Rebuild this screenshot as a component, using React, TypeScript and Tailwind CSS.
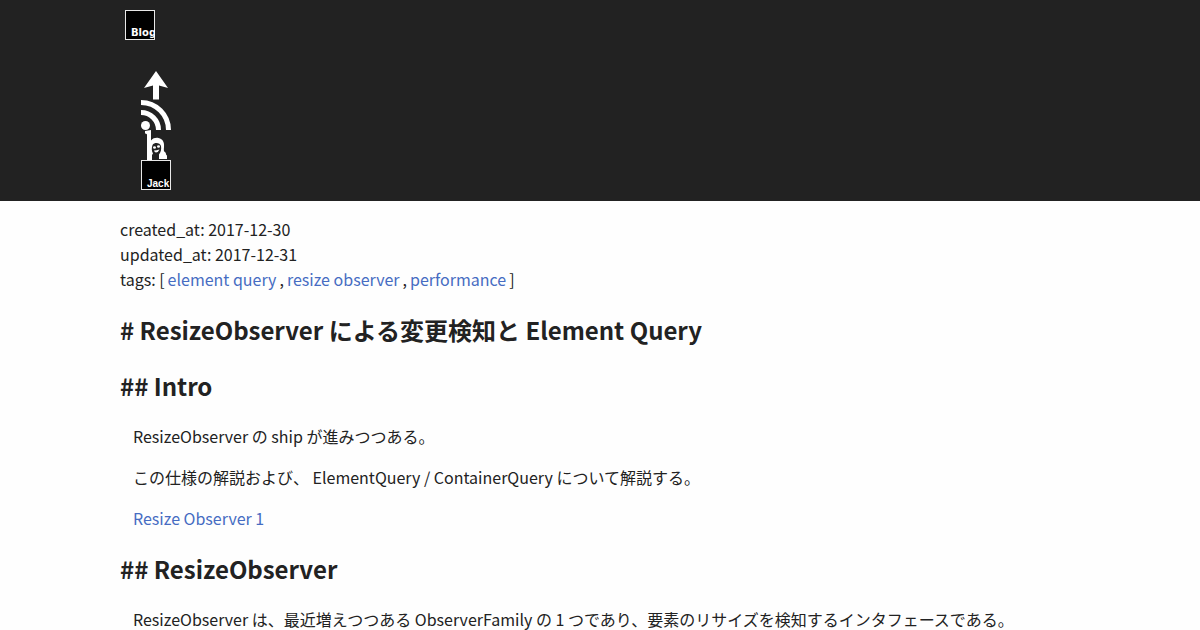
const tags = ["element query", "resize observer", "performance"];

function BlogLogo() {
  return (
    <svg viewBox="0 0 30 30" className="block size-[30px]" aria-hidden="true">
      <rect x="0.5" y="0.5" width="29" height="29" fill="#000" stroke="#e8e8e8" />
      <text x="6" y="26" fill="#fff" fontSize="10" fontWeight="700" fontFamily="'DejaVu Sans', sans-serif">
        Blog
      </text>
    </svg>
  );
}

function ArrowIcon() {
  return (
    <svg viewBox="0 0 30 30" className="block size-[30px]" fill="#fff" aria-hidden="true">
      <path d="M15 1 L27 18 L18 15.5 V29.5 H12 V15.5 L3 18 Z" />
    </svg>
  );
}

function FeedIcon() {
  return (
    <svg viewBox="0 0 30 30" className="block size-[30px]" aria-hidden="true">
      <circle cx="4.5" cy="25.5" r="4.5" fill="#fff" />
      <path d="M0 12.5 A17.5 17.5 0 0 1 17.5 30 M0 2.5 A27.5 27.5 0 0 1 27.5 30" fill="none" stroke="#fff" strokeWidth="5" />
    </svg>
  );
}

// "h" mark with a small face in the arch
function HatenaIcon() {
  return (
    <svg viewBox="0 0 30 30" className="block size-[30px]" aria-hidden="true">
      <path
        d="M4 1 L10 0 V10.5 C12 8 15 7.5 17.5 8 C22 9 23.500 12.5 23 17 C22.800 20 22.500 21.500 24 22 C25.500 23 24.500 25 26 25.500 V29 H18 V24.500 C20 22 20.500 19 20 16 C19 12.500 13.500 12 11.500 15 C10.500 18 10.500 21 12 23.500 L11 25 V30 H6 V4.500 C5.500 3.500 4.500 3.500 4 3.500 Z"
        fill="#fff"
      />
      <ellipse cx="13.500" cy="17.500" rx="1.500" ry="1.300" fill="#fff" />
      <ellipse cx="17.500" cy="16.500" rx="1.500" ry="1.300" fill="#fff" />
      <path d="M13 20.500 Q15.500 20.500 18.500 19.500 Q17.500 22 15 22.500 Q13.500 22.500 13 20.500 Z" fill="#fff" />
    </svg>
  );
}

function JackLogo() {
  return (
    <svg viewBox="0 0 30 30" className="block size-[30px]" aria-hidden="true">
      <rect x="0.5" y="0.5" width="29" height="29" fill="#000" stroke="#e8e8e8" />
      <text x="6" y="27" fill="#fff" fontSize="10" fontWeight="700" fontFamily="'Liberation Sans', sans-serif">
        Jack
      </text>
    </svg>
  );
}

const navLinks = [
  { label: "Back to top", href: "#top", Icon: ArrowIcon },
  { label: "Feed", href: "#feed", Icon: FeedIcon },
  { label: "Bookmark", href: "#bookmark", Icon: HatenaIcon },
  { label: "Jack", href: "#about", Icon: JackLogo },
];

export default function App() {
  return (
    <div
      id="top"
      className="min-h-screen bg-[#fefefe] text-base leading-[25px] text-[#222] font-['Noto_Sans_CJK_JP',sans-serif]"
    >
      <header className="bg-[#222] px-[10%] pt-[10px] pb-[11px]">
        <a href="#blog" aria-label="Blog" className="ml-[5px] block w-fit">
          <BlogLogo />
        </a>
        <nav className="mt-[30px] ml-[21px]">
          <ul>
            {navLinks.map(({ label, href, Icon }) => (
              <li key={label}>
                <a href={href} aria-label={label} className="block w-fit">
                  <Icon />
                </a>
              </li>
            ))}
          </ul>
        </nav>
      </header>

      <main className="px-[10%] pt-4">
        <article>
          <div>
            <div>created_at: 2017-12-30</div>
            <div>updated_at: 2017-12-31</div>
            <div>
              tags: [
              {tags.map((tag, i) => (
                <span key={tag}>
                  {i > 0 && ","}
                  <a href="#tags" className="mx-[3px] text-[#466cc2]">
                    {tag}
                  </a>
                </span>
              ))}
              ]
            </div>
          </div>

          <h1 className="my-5 text-2xl leading-9 font-bold"># ResizeObserver による変更検知と Element Query</h1>

          <section>
            <h2 className="my-5 text-2xl leading-9 font-bold">## Intro</h2>
            <div className="space-y-4 px-[13px]">
              <p>ResizeObserver の ship が進みつつある。</p>
              <p>この仕様の解説および、 ElementQuery / ContainerQuery について解説する。</p>
              <p>
                <a href="#resize-observer" className="text-[#466cc2]">
                  Resize Observer 1
                </a>
              </p>
            </div>
          </section>

          <section id="resize-observer">
            <h2 className="my-5 text-2xl leading-9 font-bold">## ResizeObserver</h2>
            <div className="space-y-4 px-[13px]">
              <p>
                ResizeObserver は、最近増えつつある ObserverFamily の 1 つであり、要素のリサイズを検知するインタフェースである。
              </p>
            </div>
          </section>
        </article>
      </main>
    </div>
  );
}
